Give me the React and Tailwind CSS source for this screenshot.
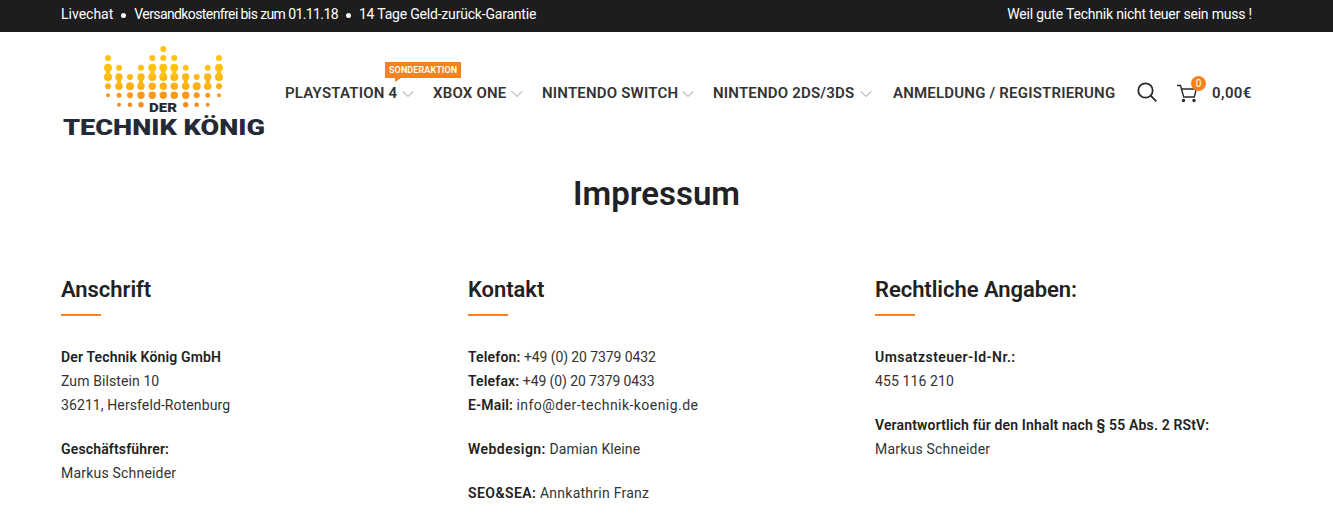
import React from 'react';
import { ChevronDown } from 'lucide-react';

const font = { fontFamily: 'Roboto, sans-serif' };

const outer = [[58, 3], [67.7, 4], [77, 4], [86.3, 3], [95.3, 2]];
const low = [[67.7, 3], [77, 3.7], [86.3, 3.7], [95.3, 2.5], [104.7, 2]];
const valley = [[77, 3], [86.3, 4], [95.3, 3], [104.7, 2.3]];
const mid = [[67.7, 3], [77, 3.7], [86.3, 3.7], [95.3, 3.7], [104.7, 2.7]];
const high = [[58, 3], [67.7, 4], [77, 4], [86.3, 3.7], [95.3, 3.7]];
const peak = [[49, 3], [58, 3], [67.7, 4], [77, 4], [86.3, 3.7], [95.3, 3.7]];

// x, dots, connected pair of rows
const logoColumns = [
  [108, outer, [67.7, 77]],
  [119, low, [77, 86.3]],
  [130, valley, null],
  [141, mid, [77, 86.3]],
  [152.3, high, [67.7, 77]],
  [163.3, peak, [67.7, 77]],
  [174.3, high, [67.7, 77]],
  [185.7, mid, [77, 86.3]],
  [196.7, valley, null],
  [207.7, low, [77, 86.3]],
  [219, outer, [67.7, 77]],
];

const dotColor = (y) => {
  if (y < 70) return '#ffc30f';
  if (y < 80) return '#fdb813';
  if (y < 90) return '#fdb015';
  if (y < 100) return '#fa9a1d';
  return '#f68b1f';
};

const Logo = () => (
  <svg width="206" height="95" viewBox="61 45 206 95" className="block shrink-0">
    {logoColumns.map(([x, dots, link]) => (
      <g key={x}>
        {dots.map(([y, r]) => (
          <circle key={y} cx={x} cy={y} r={r} fill={dotColor(y)} />
        ))}
        {link && <line x1={x} x2={x} y1={link[0]} y2={link[1]} stroke={dotColor(link[0])} strokeWidth="4" />}
      </g>
    ))}
    <text x="149" y="112.4" textLength="28" lengthAdjust="spacingAndGlyphs" fontFamily="Roboto, sans-serif" fontWeight="900" fontSize="13.5" fill="#252a37">DER</text>
    <text x="63" y="134.5" textLength="202" lengthAdjust="spacingAndGlyphs" fontFamily="Roboto, sans-serif" fontWeight="900" fontSize="22.5" fill="#252a37">TECHNIK KÖNIG</text>
  </svg>
);

const NavItem = ({ label, width, chevron = true, children }) => (
  <div className="relative flex items-center">
    {children}
    <span className={`text-[15px] font-semibold text-[#333] tracking-[0.2px] whitespace-nowrap ${width}`}>{label}</span>
    {chevron && <ChevronDown size={20} strokeWidth={1.2} className="text-[#999]" />}
  </div>
);

const Line = ({ children }) => <div className="h-6 whitespace-nowrap">{children}</div>;
const Label = ({ wide, children }) => (
  <b className={`font-semibold text-[#222] ${wide ? 'tracking-[0.45px]' : 'tracking-[0.15px]'}`}>{children}</b>
);
const Bullet = () => <span className="w-[5px] h-[5px] rounded-full bg-white mx-2 mt-0.5" />;

const Column = ({ title, children }) => (
  <section>
    <h2 className="text-[22px] leading-7 font-semibold text-[#222] tracking-[-0.05px]">{title}</h2>
    <div className="w-10 h-0.5 bg-[#f58220] mt-2.5 mb-[31px]" />
    <div className="flex flex-col gap-5 text-sm text-[#333] tracking-[0.1px]">{children}</div>
  </section>
);

export default function App() {
  return (
    <div className="min-h-screen bg-white" style={font}>
      {/* Top bar */}
      <div className="h-8 pb-1 bg-[#1d1d1d] text-white text-sm flex items-center justify-between pl-[61px] pr-[81px]">
        <div className="flex items-center">
          <span>Livechat</span>
          <Bullet />
          <span className="tracking-[-0.6px]">Versandkostenfrei bis zum 01.11.18</span>
          <Bullet />
          <span className="tracking-[-0.2px]">14 Tage Geld-zurück-Garantie</span>
        </div>
        <span className="tracking-[-0.2px]">Weil gute Technik nicht teuer sein muss !</span>
      </div>

      {/* Header */}
      <header className="flex items-center pl-[61px] pr-[81px] pt-[13px]">
        <Logo />
        <nav className="ml-[18px] flex flex-1 items-center gap-[15px] pt-0.5">
          <NavItem label="PLAYSTATION 4" width="w-[113px]">
            <div className="absolute left-[100px] -top-[20px] bg-[#f58220] text-white text-[9px] leading-4 h-4 px-1 font-semibold tracking-[0.1px] whitespace-nowrap">
              SONDERAKTION
              <span className="absolute left-[10px] top-4 w-0 h-0 border-t-[4px] border-t-[#f58220] border-r-[6px] border-r-transparent" />
            </div>
          </NavItem>
          <NavItem label="XBOX ONE" width="w-[74px]" />
          <NavItem label="NINTENDO SWITCH" width="w-[136px]" />
          <NavItem label="NINTENDO 2DS/3DS" width="w-[143px]" />
          <div className="ml-0.5">
            <NavItem label="ANMELDUNG / REGISTRIERUNG" width="w-[224px]" chevron={false} />
          </div>
          <svg width="20" height="20" viewBox="0 0 20 20" fill="none" stroke="#2a2a2a" strokeWidth="1.8" className="ml-[5px] -mt-[3px]">
            <circle cx="8.5" cy="8.5" r="7.2" />
            <line x1="13.6" y1="13.6" x2="19.4" y2="19.4" />
          </svg>
          <div className="relative flex items-center ml-[5px]">
            <svg width="21" height="19" viewBox="0 0 21 19" fill="none" stroke="#2a2a2a" strokeWidth="1.4">
              <path d="M0 1.5h3.5l3.2 11.5h10.6l2-8H5" />
              <circle cx="6.5" cy="16.5" r="1" fill="#2a2a2a" />
              <circle cx="17" cy="16.5" r="1" fill="#2a2a2a" />
            </svg>
            <span className="absolute left-[14px] -top-[6px] w-[15px] h-[15px] rounded-full bg-[#f58220] text-white text-[10px] leading-[15px] text-center">0</span>
            <span className="ml-[14px] text-[15px] font-semibold text-[#333] tracking-[0.4px]">0,00€</span>
          </div>
        </nav>
      </header>

      {/* Content */}
      <main className="pl-[61px] pr-[81px]">
        <h1 className="text-center text-[33px] leading-10 font-semibold text-[#222] mt-[34px]">Impressum</h1>
        <div className="grid grid-cols-3 gap-[30px] mt-[62px]">
          <Column title="Anschrift">
            <div>
              <Line><Label>Der Technik König GmbH</Label></Line>
              <Line>Zum Bilstein 10</Line>
              <Line>36211, Hersfeld-Rotenburg</Line>
            </div>
            <div>
              <Line><Label>Geschäftsführer:</Label></Line>
              <Line><span className="tracking-[0.2px]">Markus Schneider</span></Line>
            </div>
          </Column>
          <Column title="Kontakt">
            <div>
              <Line><Label>Telefon:</Label> <span className="tracking-[-0.1px]">+49 (0) 20 7379 0432</span></Line>
              <Line><Label>Telefax:</Label> <span className="tracking-[-0.1px]">+49 (0) 20 7379 0433</span></Line>
              <Line><Label>E-Mail:</Label> <span className="tracking-[0.45px]">info@der-technik-koenig.de</span></Line>
            </div>
            <Line><Label wide>Webdesign:</Label> Damian Kleine</Line>
            <Line><Label wide>SEO&amp;SEA:</Label> <span className="tracking-[0.25px]">Annkathrin Franz</span></Line>
          </Column>
          <Column title="Rechtliche Angaben:">
            <div>
              <Line><Label wide>Umsatzsteuer-Id-Nr.:</Label></Line>
              <Line>455 116 210</Line>
            </div>
            <div>
              <Line><Label>Verantwortlich für den Inhalt nach § 55 Abs. 2 RStV:</Label></Line>
              <Line><span className="tracking-[0.2px]">Markus Schneider</span></Line>
            </div>
          </Column>
        </div>
      </main>
    </div>
  );
}
